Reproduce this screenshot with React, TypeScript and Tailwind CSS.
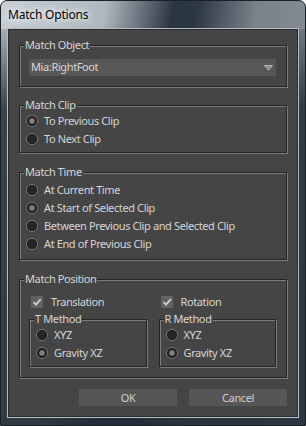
import React from "react";

function Radio({ label, checked }: { label: string; checked?: boolean }) {
  return (
    <div className="flex h-[18px] items-center gap-[6px]">
      <svg width="12" height="12" viewBox="0 0 12 12" className="shrink-0">
        <circle cx="6" cy="6" r="5.5" fill="#262626" stroke="#7e7e7e" strokeWidth="1" />
        <circle cx="6" cy="6" r="4.5" fill="none" stroke="#1a1a1a" strokeWidth="1" />
        {checked && <circle cx="6" cy="6" r="2.7" fill="#808080" />}
      </svg>
      <span>{label}</span>
    </div>
  );
}

function Check({ label }: { label: string }) {
  return (
    <div className="ml-[2px] flex h-[18px] items-center gap-[8px]">
      <svg width="12" height="12" viewBox="0 0 12 12" className="shrink-0">
        <rect x="0" y="0" width="12" height="12" fill="#626262" />
        <path d="M2.5 6.2 L5 8.7 L9.8 3.2" fill="none" stroke="#cfcfcf" strokeWidth="1.8" />
      </svg>
      <span>{label}</span>
    </div>
  );
}

function Group({
  label,
  className,
  children,
}: {
  label: string;
  className?: string;
  children: React.ReactNode;
}) {
  return (
    <div
      className={`relative border border-[#242424] shadow-[1px_1px_0_#7c7c7c,inset_1px_1px_0_#7c7c7c] ${className ?? ""}`}
    >
      <span className="absolute -top-[9px] left-[4px] bg-[#454545] px-[1px] leading-[15px]">
        {label}
      </span>
      {children}
    </div>
  );
}

function Button({ label }: { label: string }) {
  return (
    <button className="flex h-[17px] w-[98px] items-center justify-center bg-[#565656] leading-none text-[#cfcfcf]">
      {label}
    </button>
  );
}

export default function App() {
  return (
    <div className="relative h-[426px] w-[306px] overflow-hidden rounded-t-[7px] border border-[#1a2028] bg-[linear-gradient(100deg,#c8cfd5_0%,#aeb7be_28%,#2a3542_46%,#2c3744_52%,#7a838b_68%,#8b939a_100%)] font-['Noto_Sans',sans-serif] text-[11px] text-[#d4d6d8]">
      {/* darker side frames below the caption */}
      <div className="absolute inset-x-0 bottom-0 top-[28px] bg-[linear-gradient(to_bottom,rgba(40,52,66,0.2)_0%,rgba(34,44,56,0.85)_20%,rgba(34,44,56,0.9)_100%)]" />

      {/* caption */}
      <div className="relative flex h-[28px] items-center pl-[7px]">
        <span className="text-[12px] tracking-[-0.2px] text-black [text-shadow:0_0_6px_#fff,0_0_10px_#fff]">
          Match Options
        </span>
      </div>

      {/* client area */}
      <div className="relative ml-[7px] h-[388px] w-[290px] border border-[#2c2c2c] bg-[#454545] px-[10px] pb-[10px] pt-[15px] tracking-[-0.38px] shadow-[0_0_0_1px_#b4bcc4]">
        <Group label="Match Object" className="pb-[10px] pl-[9px] pr-[10px] pt-[13px]">
          <div className="flex h-[17px] w-[247px] items-center justify-between bg-[#575757] pl-[2px] pr-[3px] text-[#d8d8d8]">
            <span>Mia:RightFoot</span>
            <svg width="9" height="6" viewBox="0 0 9 6">
              <path d="M0.5 0.5 H8.5 L4.5 5.2 Z" fill="#8a8a8a" stroke="#b8b8b8" strokeWidth="1" />
            </svg>
          </div>
        </Group>

        <Group label="Match Clip" className="mt-[18px] pb-[4px] pl-[6px] pt-[6px]">
          <Radio label="To Previous Clip" checked />
          <Radio label="To Next Clip" />
        </Group>

        <Group label="Match Time" className="mt-[19px] pb-[6px] pl-[6px] pt-[8px]">
          <Radio label="At Current Time" />
          <Radio label="At Start of Selected Clip" checked />
          <Radio label="Between Previous Clip and Selected Clip" />
          <Radio label="At End of Previous Clip" />
        </Group>

        <Group label="Match Position" className="mt-[19px] pb-[10px] pl-[9px] pr-[10px] pt-[13px]">
          <div className="grid grid-cols-2 gap-x-[12px]">
            <Check label="Translation" />
            <Check label="Rotation" />
          </div>
          <div className="mt-[8px] grid grid-cols-2 gap-x-[12px]">
            <Group label="T Method" className="pb-[4px] pl-[6px] pt-[6px]">
              <Radio label="XYZ" />
              <Radio label="Gravity XZ" checked />
            </Group>
            <Group label="R Method" className="pb-[4px] pl-[6px] pt-[6px]">
              <Radio label="XYZ" />
              <Radio label="Gravity XZ" checked />
            </Group>
          </div>
        </Group>

        <div className="mt-[11px] flex justify-end gap-[12px]">
          <Button label="OK" />
          <Button label="Cancel" />
        </div>
      </div>
    </div>
  );
}
